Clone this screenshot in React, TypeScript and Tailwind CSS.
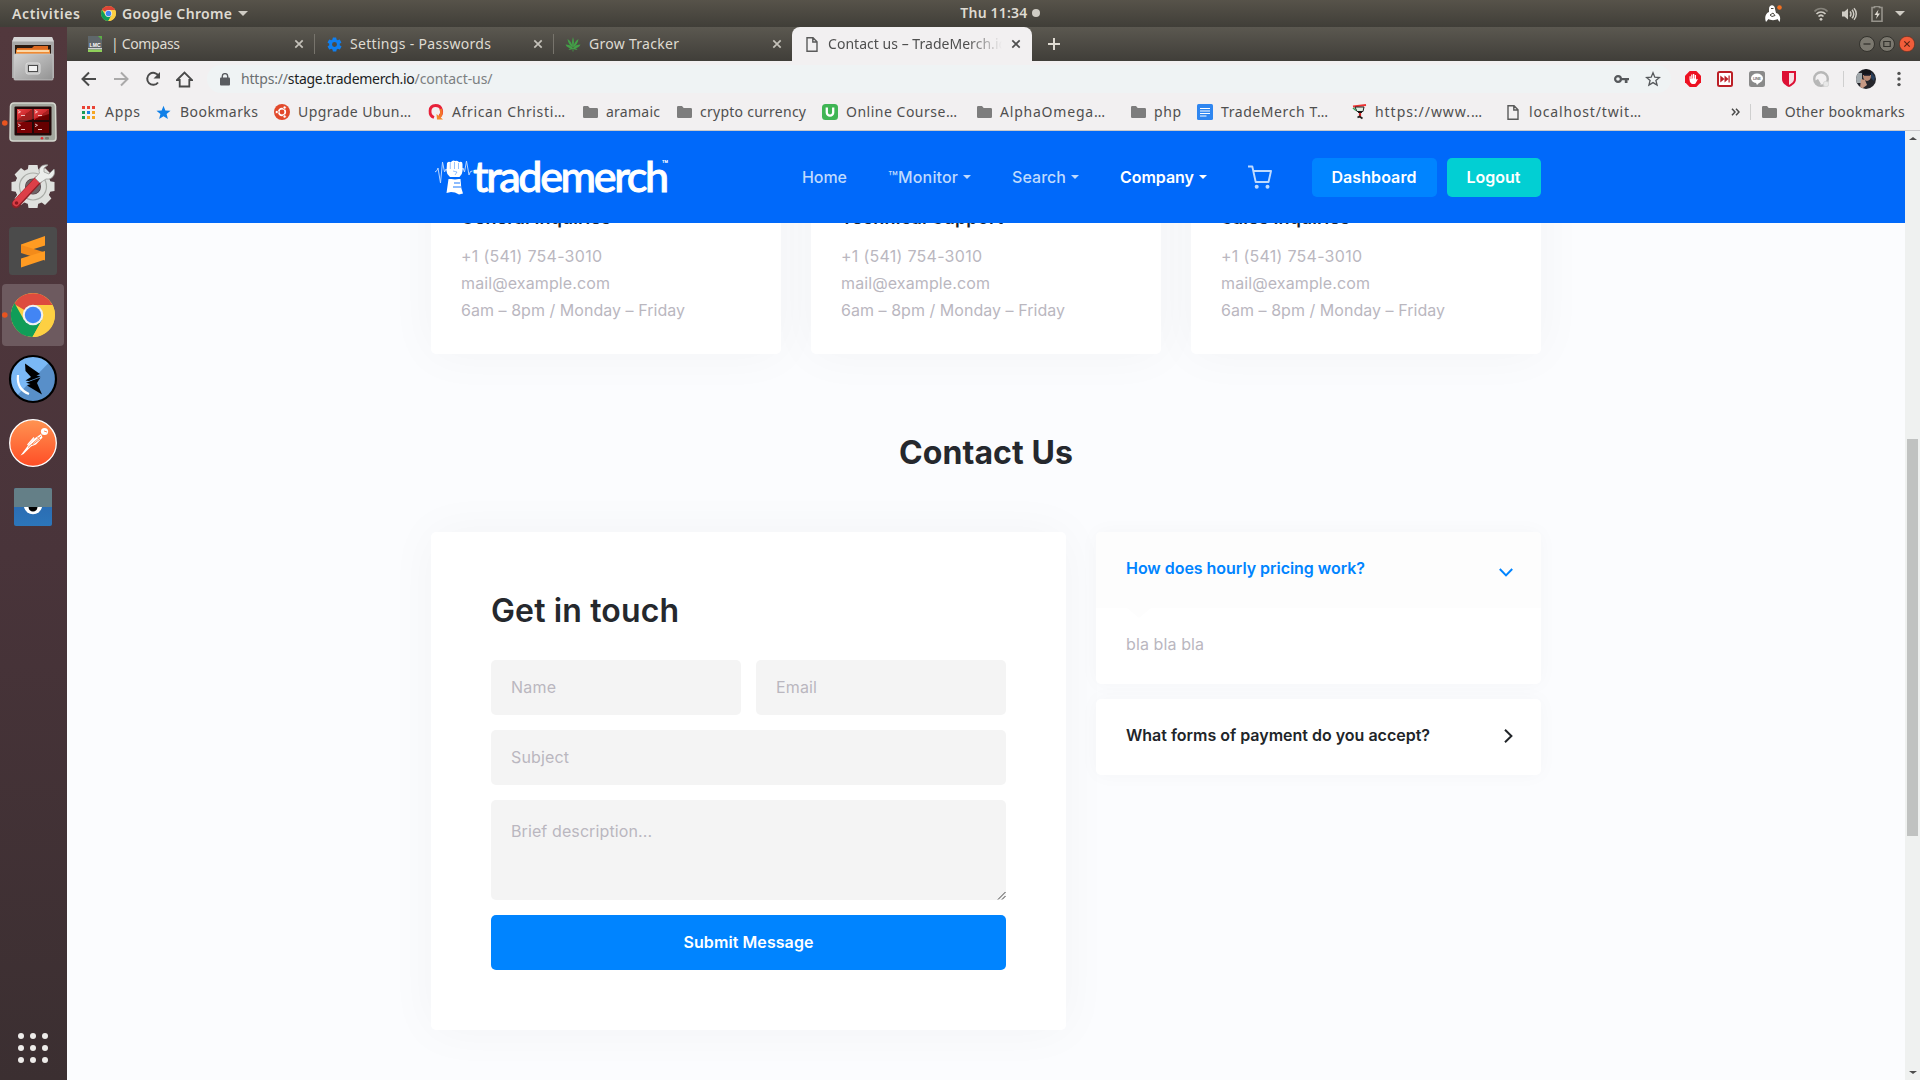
import React, { useLayoutEffect, useRef, useState } from "react";

const UI = "font-['Noto_Sans','Open_Sans',sans-serif]";

/* Text tracked so that it fills a given width in pixels. */
function Fit({ w, text, className = "" }: { w: number; text: string; className?: string }) {
  const ref = useRef<HTMLSpanElement>(null);
  const [ls, setLs] = useState(0);
  useLayoutEffect(() => {
    const el = ref.current;
    if (!el) return;
    el.style.letterSpacing = "0px";
    const natural = el.getBoundingClientRect().width;
    setLs((w - natural) / Math.max(1, text.length - 1));
    el.style.letterSpacing = "";
  }, [w, text]);
  return (
    <span ref={ref} className={"inline-block whitespace-pre shrink-0 " + className} style={ls ? { letterSpacing: ls + "px" } : undefined}>
      {text}
    </span>
  );
}

function ChromeMark({ className }: { className: string }) {
  return (
    <svg viewBox="0 0 44 44" className={className}>
      <circle cx="22" cy="22" r="22" fill="#fdd043" />
      <path d="M22 22 L3 11 A22 22 0 0 1 41.5 12 L22 12 Z" fill="#dd4437" />
      <path d="M3 11 A22 22 0 0 0 21.5 44 L31 27 L22 22 L13 27 Z" fill="#109d58" />
      <path d="M22 12 L41.500 12 A22 22 0 0 1 21.500 44 L31 27 Z" fill="#fdd043" />
      <circle cx="22" cy="22" r="10.200" fill="#f1f1f1" />
      <circle cx="22" cy="22" r="8" fill="#4285f4" />
    </svg>
  );
}

function TopBar() {
  return (
    <div className={"flex h-[27px] w-full shrink-0 items-center bg-gradient-to-b from-[#57534a] to-[#403e38] text-[14px] font-semibold text-[#dfdbd2] " + UI}>
      <div className="flex w-[89px] items-center pl-3"><Fit w={68} text="Activities" /></div>
      <ChromeMark className="ml-3 h-[15px] w-[15px]" />
      <Fit w={110} text="Google Chrome" className="ml-[6px]" />
      <span className="ml-[6px] border-x-[5px] border-t-[5px] border-x-transparent border-t-[#cfccc4]" />
      <Fit w={67} text="Thu 11:34" className="ml-[712px] -mt-[2px]" />
      <span className="ml-1 -mt-px h-2 w-2 rounded-full bg-[#cfccc4]" />
      <svg viewBox="0 0 18 20" className="ml-auto h-5 w-[18px] shrink-0">
        <path d="M5 5 C5 0 11 0 11 5 L12 9 C16 10 17 14 15.500 18 L13.500 15 C12 16.500 6 16.500 4.500 15 L2 18 C0 13 2 9 5 8 Z" fill="#fff" />
        <path d="M7 4.500h2.500M6 11l3-2 2 2.500-3 1Z" stroke="#4a4841" strokeWidth="1" fill="none" />
        <circle cx="15.500" cy="3.500" r="2.300" fill="#f37021" />
      </svg>
      <svg viewBox="0 0 16 16" className="ml-[31px] h-4 w-4 shrink-0 fill-none stroke-[#cfccc4]" strokeWidth="1.700">
        <path d="M1.500 5.500 C5 1.500 11 1.500 14.500 5.500" stroke="#85827a" />
        <path d="M3.500 8 C6 5.300 10 5.300 12.500 8M5.500 10.500 C7 9 9 9 10.500 10.500" />
        <circle cx="8" cy="13.300" r="1.400" fill="#cfccc4" stroke="none" />
      </svg>
      <svg viewBox="0 0 16 16" className="ml-3 h-4 w-4 shrink-0 fill-none stroke-[#cfccc4]" strokeWidth="1.500">
        <path d="M1 5.500h2.500L7 2.500v11l-3.500-3H1Z" fill="#cfccc4" stroke="none" />
        <path d="M9 5.500c1.300 1.300 1.300 3.700 0 5M11 3.800c2.300 2.300 2.300 6.100 0 8.400M13 2.300c3 3.200 3 8.200 0 11.400" />
      </svg>
      <svg viewBox="0 0 12 16" className="ml-[14px] h-4 w-3 shrink-0">
        <path d="M3.500 1.500v-1h5v1H11v13.700H1V1.500Z" fill="none" stroke="#96938b" strokeWidth="1.600" />
        <path d="M7.500 3.500 3.500 9H6L5 13l4-5.500H6.500Z" fill="#dfdbd2" />
      </svg>
      <span className="ml-3 mr-[15px] border-x-[5px] border-t-[5px] border-x-transparent border-t-[#cfccc4]" />
    </div>
  );
}

function DockSlot({ children, active, running }: { children: React.ReactNode; active?: boolean; running?: boolean }) {
  return (
    <div className="h-16 w-full pl-[2px] py-px">
      <div className={active ? "h-[62px] w-[62px] rounded-[4px] bg-[#6d5a5f]" : "h-[62px] w-[62px]"}>
        <svg viewBox="2 1 62 62" className="h-[62px] w-[62px]">
          {running && <circle cx="4.800" cy="32" r="2.800" fill="#e95420" />}
          {children}
        </svg>
      </div>
    </div>
  );
}

function Dock() {
  return (
    <div className="flex w-[67px] shrink-0 flex-col bg-gradient-to-b from-[#52383d] via-[#49343a] to-[#3b2f31]">
      <DockSlot>
        <defs>
          <linearGradient id="cab" x1="0" y1="0" x2="1" y2="1"><stop offset="0" stopColor="#d2d2d2" /><stop offset="1" stopColor="#929292" /></linearGradient>
          <linearGradient id="red" x1="0" y1="0" x2="1" y2="1"><stop offset="0" stopColor="#e53a3d" /><stop offset=".5" stopColor="#b3141a" /><stop offset=".52" stopColor="#760000" /><stop offset="1" stopColor="#5f0000" /></linearGradient>
          <linearGradient id="post" x1="0" y1="0" x2="0" y2="1"><stop offset="0" stopColor="#ff9452" /><stop offset="1" stopColor="#ff4e26" /></linearGradient>
          <linearGradient id="eye" x1="0" y1="0" x2="0" y2="1"><stop offset="0" stopColor="#2b65ad" /><stop offset="1" stopColor="#2c76ba" /></linearGradient>
        </defs>
        <path d="M14 10h38l2 5v36H12V15Z" fill="#a8a8a8" />
        <path d="M14 10h38l2 4.500H12Z" fill="#d5d5d5" />
        <rect x="15" y="18" width="36" height="10" fill="#2b1b12" />
        <path d="M17 21h15l2-2h14v9H17Z" fill="#dd6a22" />
        <path d="M16 22.500h34V28H16Z" fill="#f08a33" />
        <path d="M17 24h32" stroke="#fff0cf" strokeWidth="1.500" />
        <rect x="14" y="27" width="39" height="26" rx="1" fill="url(#cab)" stroke="#c9c9c9" strokeWidth=".7" />
        <rect x="26" y="36" width="14" height="11" rx="2" fill="#bdbdbd" stroke="#dedede" />
        <rect x="28.500" y="38.500" width="9" height="6" fill="#f2f2f2" stroke="#4b4b4b" />
      </DockSlot>
      <DockSlot running>
        <path d="M14 12h38q3 0 3.500 3L56 47q0 3-3 3H13q-3 0-3-3l.500-32q.500-3 3.500-3Z" fill="#a3a79e" stroke="#d5d8cf" strokeWidth="1.500" />
        <rect x="14.500" y="15.500" width="37" height="29" rx="1" fill="#220909" />
        <rect x="17" y="18" width="15" height="11" fill="url(#red)" /><rect x="34" y="18" width="15" height="11" fill="url(#red)" />
        <rect x="17" y="31" width="15" height="11" fill="#7b0205" /><rect x="34" y="31" width="15" height="11" fill="#650000" />
        <path d="M17 18h32l0 5L17 33Z" fill="#ff5a5a" opacity=".35" />
        <path d="M18 19.500l2.500 1.300-2.500 1.300M21 24.500h4M35 19.500l2.500 1.300-2.500 1.300M38 24.500h4M18 33l2.500 1.300-2.500 1.300M21 38.500h4M35 33l2.500 1.300-2.500 1.300M38 38.500h4" stroke="#f4d0d0" strokeWidth=".9" fill="none" />
        <circle cx="42" cy="47.300" r="1.300" fill="#e4282e" /><rect x="45" y="46" width="4" height="2.500" rx="1" fill="#777b73" />
      </DockSlot>
      <DockSlot>
        <circle cx="33" cy="31.500" r="13" fill="none" stroke="#dfe1de" strokeWidth="10" />
        {[0, 45, 90, 135, 180, 225, 270, 315].map((a) => <path key={a} d="M27.500 16l1-6h9l1 6Z" fill="#dfe1de" transform={`rotate(${a} 33 31.500)`} />)}
        <circle cx="33" cy="31.500" r="13.500" fill="none" stroke="#a9aca7" strokeWidth="1.200" />
        <circle cx="33" cy="31.500" r="7.500" fill="#6d6366" />
        <path d="M16 49 L38 25" stroke="#8d2027" strokeWidth="8.500" strokeLinecap="round" />
        <path d="M16 48 L38 24.500" stroke="#dc3f48" strokeWidth="6.500" strokeLinecap="round" />
        <path d="M35 23 L40 28 L46 24 C52 25 56 20 54 14 L49 19 L44 17 L44 13 L48 10 C41 9 38 14 39.500 18 Z" fill="#eceeec" stroke="#9a9c99" strokeWidth=".8" />
        <circle cx="16.500" cy="48" r="1.800" fill="#8c1820" />
      </DockSlot>
      <DockSlot>
        <rect x="9" y="8" width="48" height="48" rx="3.500" fill="#4b4b4b" />
        <path d="M21 25.500 L45 17v9.500L21 34Z" fill="#ff9b22" />
        <path d="M21 26v8l24 7.500v-8Z" fill="#f38b1a" />
        <path d="M21 39.500 L45 32v8.500L21 48.500Z" fill="#ff9b22" />
      </DockSlot>
      <DockSlot active running>
        <g transform="translate(11 10)">
          <circle cx="22" cy="22" r="22" fill="#fdd043" />
          <path d="M22 22 L3 11 A22 22 0 0 1 41.500 12 L22 12 Z" fill="#dd4b3e" />
          <path d="M3.500 10 A22 22 0 0 0 21.500 44 L31 27 L22 22 L13 27 Z" fill="#109d58" />
          <path d="M22 12 L41.500 12 A22 22 0 0 1 21.500 44 L31 27 Z" fill="#fdd043" />
          <circle cx="22" cy="22" r="10.300" fill="#f1f1f1" /><circle cx="22" cy="22" r="8.200" fill="#4285f4" />
        </g>
      </DockSlot>
      <DockSlot>
        <circle cx="33" cy="32" r="23" fill="#7ab8f5" />
        <path d="M49 15.500 A23 23 0 0 1 17 48.500 Z" fill="#588fc9" />
        <circle cx="33" cy="32" r="23" fill="none" stroke="#000" strokeWidth="2.200" />
        <path d="M25 16.500 40 27 36.500 28.500 40.500 29.500 29 34 25.500 33.500 31 30 25.500 24Z" fill="#000" />
        <path d="M26 35.800 40.500 30.500 37 36 42 47.500 27 38.500 30.500 37Z" fill="#000" />
        <path d="M18 28 C17 37 21 44 29 47" stroke="#fff" strokeWidth="2.200" fill="none" />
      </DockSlot>
      <DockSlot>
        <circle cx="33" cy="32" r="23.300" fill="url(#post)" stroke="#fff" strokeWidth="1.300" />
        <circle cx="44.500" cy="20.500" r="3.600" fill="#fff" />
        <path d="M41 23 L33 28.500 L28 34.500 L20.500 44.500 L23.500 43 L31 35.500 L36 33.500 L42.500 26.500 Z" fill="#fff" />
        <path d="M41 25 L28 36.500M40 28l-8 6M44 20l3 1M37 25.500l3 3" stroke="#ff7a41" strokeWidth=".9" />
        <path d="M27.500 34 L34 26.500" stroke="#fff" strokeWidth="1.200" />
      </DockSlot>
      <DockSlot>
        <rect x="14" y="13" width="38" height="38" rx="2" fill="url(#eye)" />
        <path d="M16 13h34q2 0 2 2v17H14V15q0-2 2-2Z" fill="#647f87" />
        <path d="M24 32 a9.200 9.200 0 0 0 18 0Z" fill="#fff" />
        <path d="M28.500 32 a4.500 4.500 0 0 0 9 0Z" fill="#000" />
      </DockSlot>
      <div className="mt-auto mb-[17px] ml-[18px] grid w-[30px] grid-cols-3 gap-[6px]">
        {Array.from({ length: 9 }, (_, i) => <span key={i} className="h-[6px] w-[6px] rounded-full bg-[#eeecea]" />)}
      </div>
    </div>
  );
}

function Close({ dark }: { dark?: boolean }) {
  return (
    <svg viewBox="0 0 10 10" className="h-[10px] w-[10px] shrink-0">
      <path d="M1.300 1.300l7.400 7.400M8.700 1.300L1.300 8.700" stroke={dark ? "#4f4f4f" : "#c4c1b9"} strokeWidth="1.700" />
    </svg>
  );
}

function PageIcon({ className = "" }: { className?: string }) {
  return (
    <svg viewBox="0 0 12 15" className={"h-[15px] w-3 shrink-0 " + className}>
      <path d="M1 .8h6l4 4v9.400H1ZM6.800 1v4H11" fill="none" stroke="#5a5a5a" strokeWidth="1.400" />
    </svg>
  );
}

function TabStrip() {
  return (
    <div className="flex h-[34px] items-center bg-gradient-to-b from-[#5b5850] to-[#403e39] text-[14px] text-[#dfdbd2]">
      <div className="flex h-full w-[247px] items-center pl-[21px]">
        <svg viewBox="0 0 14 16" className="h-4 w-[14px] shrink-0">
          <path d="M0 0h14v16H0Z" fill="#5f676b" /><path d="M10 0h4v4Z" fill="#5dae46" />
          <path d="M0 13.500h14V16H0Z" fill="#8fd05a" /><path d="M0 12.200h14v1H0Z" fill="#eee" />
          <text x="1.500" y="11" fontSize="5" fontWeight="bold" fill="#fff" fontFamily="Liberation Sans" textLength="11">LMC</text>
        </svg>
        <Fit w={69} text="| Compass" className="-mt-[2px] ml-[9px]" />
        <span className="ml-auto mr-[10px] flex"><Close /></span>
      </div>
      <div className="flex h-full w-[239px] items-center">
        <span className="h-5 w-px bg-[#77746c]" />
        <svg viewBox="0 0 24 24" className="ml-[11px] h-[17px] w-[17px] shrink-0">
          <path fill="#0f7ff0" d="M19.400 13a7.500 7.500 0 0 0 0-2l2.100-1.600a.5.5 0 0 0 .1-.6l-2-3.500a.5.5 0 0 0-.6-.2l-2.500 1a7.300 7.300 0 0 0-1.700-1L14.500 2.400a.5.5 0 0 0-.5-.4h-4a.5.5 0 0 0-.5.4l-.4 2.700a7.300 7.300 0 0 0-1.700 1l-2.500-1a.5.5 0 0 0-.6.2l-2 3.500a.5.5 0 0 0 .1.600L4.600 11a7.500 7.500 0 0 0 0 2l-2.100 1.600a.5.5 0 0 0-.1.600l2 3.500c.1.200.4.300.6.200l2.500-1a7.300 7.300 0 0 0 1.700 1l.4 2.700c0 .2.200.4.500.4h4c.2 0 .5-.2.500-.4l.4-2.700a7.300 7.300 0 0 0 1.700-1l2.500 1c.2.100.5 0 .6-.2l2-3.500a.5.5 0 0 0-.1-.6Zm-7.400 2.500a3.500 3.500 0 1 1 0-7 3.500 3.500 0 0 1 0 7Z" />
        </svg>
        <Fit w={141} text="Settings - Passwords" className="-mt-[2px] ml-[7px]" />
        <span className="ml-auto mr-[10px] flex"><Close /></span>
      </div>
      <div className="flex h-full w-[239px] items-center">
        <span className="h-5 w-px bg-[#77746c]" />
        <svg viewBox="0 0 16 16" className="ml-[11px] h-4 w-4 shrink-0 fill-[#43a047]">
          <path d="M8 1C9.300 5 9.300 8 8 11.500 6.700 8 6.700 5 8 1ZM2.500 3C5.500 5 7.200 7.500 7.800 11.500 4.500 9.500 3 6.500 2.500 3ZM13.500 3C10.500 5 8.800 7.500 8.200 11.500 11.500 9.500 13 6.500 13.500 3ZM.5 8.500C3.500 8.500 6 9.500 7.800 12 4.500 12.500 2 11.500.5 8.500ZM15.500 8.500C12.500 8.500 10 9.500 8.200 12 11.500 12.500 14 11.500 15.500 8.500ZM3.500 13.500C5 12 6.500 11.700 8 12 9.500 11.700 11 12 12.500 13.500 11 14 9.500 13.700 8.400 12.700V15.500H7.600V12.700C6.500 13.700 5 14 3.500 13.500Z" />
        </svg>
        <Fit w={90} text="Grow Tracker" className="-mt-[2px] ml-2" />
        <span className="ml-auto mr-[10px] flex"><Close /></span>
      </div>
      <div className="flex h-full w-[240px] items-center rounded-t-lg bg-[#f2f0f1] pl-[14px] text-[#4f4f4f]">
        <PageIcon />
        <span className="-mt-[2px] ml-[10px] w-[174px] overflow-hidden [mask-image:linear-gradient(to_right,#000_80%,transparent)]">
          <Fit w={179} text="Contact us – TradeMerch.io" />
        </span>
        <span className="ml-[9px] flex"><Close dark /></span>
      </div>
      <svg viewBox="0 0 12 12" className="ml-4 h-3 w-3"><path d="M6 0v12M0 6h12" stroke="#dfdbd2" strokeWidth="2" /></svg>
      <div className="ml-auto mr-[5px] flex gap-1">
        <svg viewBox="0 0 16 16" className="h-4 w-4"><circle cx="8" cy="8" r="7.500" fill="#7b786f" stroke="#33322d" /><path d="M4.500 8h7" stroke="#33322d" strokeWidth="1.300" /></svg>
        <svg viewBox="0 0 16 16" className="h-4 w-4"><circle cx="8" cy="8" r="7.500" fill="#7b786f" stroke="#33322d" /><path d="M4.800 5.500h6.400v5H4.800Z" fill="none" stroke="#33322d" strokeWidth="1.200" /></svg>
        <svg viewBox="0 0 16 16" className="h-4 w-4"><circle cx="8" cy="8" r="7.700" fill="#f15d3a" stroke="#52281d" strokeWidth=".6" /><path d="M5.300 5.300l5.400 5.400M10.700 5.300l-5.400 5.400" stroke="#5a2415" strokeWidth="1.200" /></svg>
      </div>
    </div>
  );
}

function Toolbar() {
  return (
    <div className="flex h-9 items-center bg-[#f2f0f1] pl-[14px] text-[14px]">
      <svg viewBox="0 0 16 16" className="h-4 w-4 shrink-0 fill-none stroke-[#4a4a4a]" strokeWidth="2"><path d="M15 8H2M8 1.500L1.500 8 8 14.500" /></svg>
      <svg viewBox="0 0 16 16" className="ml-4 h-4 w-4 shrink-0 fill-none stroke-[#aaa9a9]" strokeWidth="2"><path d="M1 8h13M8 1.500L14.500 8 8 14.500" /></svg>
      <svg viewBox="0 0 16 16" className="ml-4 h-4 w-4 shrink-0"><path d="M13 11.500A6 6 0 1 1 13.500 5" fill="none" stroke="#4a4a4a" strokeWidth="2" /><path d="M15 1v6.500H8.500Z" fill="#4a4a4a" /></svg>
      <svg viewBox="0 0 17 17" className="ml-[15px] h-[17px] w-[17px] shrink-0 fill-none stroke-[#4a4a4a]" strokeWidth="1.800"><path d="M1 9L8.500 1.500 16 9H13.300V15.500H3.700V9Z" /></svg>
      <div className="ml-[14px] flex h-[28px] w-[1464px] shrink-0 items-center rounded-full bg-[#eff3f4] pl-[13px]">
        <svg viewBox="0 0 10 13" className="h-[13px] w-[10px] shrink-0"><rect x="0" y="4.500" width="10" height="8" rx="1" fill="#5a5c60" /><path d="M2.300 5V3.300a2.700 2.700 0 0 1 5.400 0V5" stroke="#5a5c60" strokeWidth="1.400" fill="none" /></svg>
        <Fit w={47} text="https://" className="-mt-[2px] ml-[11px] text-[#6b6f71]" />
        <Fit w={127} text="stage.trademerch.io" className="-mt-[2px] text-[#1c1e1f]" />
        <Fit w={78} text="/contact-us/" className="-mt-[2px] text-[#7c8082]" />
        <svg viewBox="0 0 15 10" className="ml-auto h-[10px] w-[15px]"><circle cx="4" cy="5" r="2.900" fill="none" stroke="#55585b" strokeWidth="2.200" /><path d="M7 3.900h8v2.400h-1.500V9h-2.700V6.300H7Z" fill="#55585b" /></svg>
        <svg viewBox="0 0 16 16" className="ml-4 mr-[10px] h-4 w-4"><path d="M8 1.800l1.800 4.400 4.700.3-3.600 3 1.200 4.600L8 11.600 3.900 14.100l1.200-4.600-3.600-3 4.700-.3Z" fill="none" stroke="#55585b" strokeWidth="1.300" /></svg>
      </div>
      <svg viewBox="0 0 16 16" className="ml-[14px] h-4 w-4 shrink-0"><path d="M4.700 0h6.600L16 4.700v6.600L11.300 16H4.700L0 11.300V4.700Z" fill="#ed1122" /><path d="M4.500 8.500V5.300h1.200V8h.5V3.500h1.300V7.500H8V3h1.300v4.500h.5V4H11v5l.8-1.200 1 .5L10.500 12.500Q9 13.500 6.500 12.800 4.500 11.500 4.500 8.500Z" fill="#fff" /></svg>
      <svg viewBox="0 0 16 16" className="ml-4 h-4 w-4 shrink-0"><rect x="1" y="1" width="14" height="14" rx="1.500" fill="#fff" stroke="#bc1f26" strokeWidth="2" /><path d="M3.300 4.500L7.500 8 3.300 11.500ZM7.500 4.500L11.500 8 7.500 11.500ZM11.500 4.500h1.200v7h-1.200Z" fill="#bc1f26" /></svg>
      <svg viewBox="0 0 16 16" className="ml-4 h-4 w-4 shrink-0"><rect width="16" height="16" rx="2.500" fill="#8a8a8a" /><ellipse cx="8" cy="7.300" rx="6" ry="4.800" fill="#fff" /><path d="M6.500 11L8 14l3-3Z" fill="#fff" /><text x="4" y="9" fontSize="4" fontFamily="Liberation Sans" fontWeight="bold" fill="#777" textLength="8">LINE</text></svg>
      <svg viewBox="0 0 16 16" className="ml-4 h-4 w-4 shrink-0"><path d="M1 0h14v8c0 4-3.500 6.500-7 8-3.500-1.500-7-4-7-8Z" fill="#dd1034" /><path d="M8 2h5v6c0 2.700-2.400 4.700-5 5.900Z" fill="#f6dfe4" /></svg>
      <svg viewBox="0 0 16 16" className="ml-4 h-4 w-4 shrink-0"><circle cx="8" cy="8" r="6.800" fill="#f2f0f1" stroke="#b7b7b7" strokeWidth="2.400" /><path d="M1.500 10L5 8l3 5-3 2Z" fill="#b7b7b7" /><circle cx="13" cy="13" r="2.800" fill="#e8e8e8" stroke="#ccc" strokeWidth=".6" /></svg>
      <span className="ml-[14px] h-4 w-px bg-[#cfcfcf]" />
      <svg viewBox="0 0 20 20" className="ml-3 h-5 w-5 shrink-0">
        <clipPath id="av"><circle cx="10" cy="10" r="10" /></clipPath>
        <g clipPath="url(#av)"><path d="M0 0h20v20H0Z" fill="#26262c" /><path d="M0 4h6v10H0Z" fill="#a2a9ad" /><ellipse cx="11" cy="7" rx="4" ry="5" fill="#b98873" /><path d="M6 2q5-4 10 1v3H7Z" fill="#15151b" /><path d="M8 5h6v1.700H8Z" fill="#191a28" /><path d="M5 10l4 1 2 5-4 3H4Z" fill="#c79a85" /><path d="M15 3l4 5-1 4-3-3Z" fill="#293e5b" /></g>
      </svg>
      <svg viewBox="0 0 4 16" className="ml-[21px] h-4 w-1 shrink-0 fill-[#505050]"><circle cx="2" cy="2.400" r="1.700" /><circle cx="2" cy="8" r="1.700" /><circle cx="2" cy="13.600" r="1.700" /></svg>
    </div>
  );
}

function Folder() {
  return <svg viewBox="0 0 15 12" className="h-3 w-[15px]"><path d="M0 1.200Q0 0 1.200 0H5l1.700 2h7Q15 2 15 3.200v7.600q0 1.200-1.200 1.200H1.200Q0 12 0 10.800Z" fill="#7d7d7d" /></svg>;
}

const squares = ["#ea4335", "#ea4335", "#ea4335", "#1a9d57", "#1a83e8", "#f5a623", "#1a9d57", "#f5a623", "#f5a623"];

function Bookmark({ width, slot = "w-[23px]", tw, text, children }: { width: string; slot?: string; tw: number; text: string; children: React.ReactNode }) {
  return (
    <div className={"flex shrink-0 items-center " + width}>
      <span className={"flex shrink-0 " + slot}>{children}</span>
      <Fit w={tw} text={text} className="-mt-[2px]" />
    </div>
  );
}

function BookmarksBar() {
  return (
    <div className="flex h-[34px] items-center border-b border-[#c9c9cb] bg-[#f2f0f1] pb-[3px] pl-[15px] text-[14px] text-[#4f4f4f]">
      <Bookmark width="w-[74px]" tw={35} text="Apps">
        <span className="grid grid-cols-3 gap-[2px]">{squares.map((c, i) => <i key={i} className="h-[3px] w-[3px]" style={{ background: c }} />)}</span>
      </Bookmark>
      <Bookmark width="w-[118px]" slot="w-6" tw={78} text="Bookmarks">
        <svg viewBox="0 0 16 16" className="h-[15px] w-[15px]"><path d="M8 .8l2 5 5.500.4-4.200 3.500 1.400 5.300L8 12.100 3.300 15l1.400-5.300L.5 6.200 6 5.800Z" fill="#1080e8" /></svg>
      </Bookmark>
      <Bookmark width="w-[154px]" slot="w-6" tw={113} text="Upgrade Ubun…">
        <svg viewBox="0 0 16 16" className="h-4 w-4"><circle cx="8" cy="8" r="8" fill="#e2492b" /><circle cx="8" cy="8" r="3.300" fill="none" stroke="#fff" strokeWidth="1.700" /><g fill="#fff" stroke="#e2492b" strokeWidth=".7"><circle cx="2.800" cy="8" r="1.600" /><circle cx="10.600" cy="3.500" r="1.600" /><circle cx="10.600" cy="12.500" r="1.600" /></g></svg>
      </Bookmark>
      <Bookmark width="w-[155px]" slot="w-6" tw={113} text="African Christi…">
        <svg viewBox="0 0 16 16" className="h-4 w-4"><path d="M6 13.500C.5 11.500.5 1.500 7.500 1.500c7 0 7.500 8 4 11" fill="none" stroke="#e8213a" strokeWidth="2.800" /><path d="M8.500 10l6.500 5.500H9Z" fill="#f58a2a" /><path d="M12.500 5c1.500 3 1 6-1 8" stroke="#f4762a" strokeWidth="2.600" fill="none" /></svg>
      </Bookmark>
      <Bookmark width="w-[94px]" tw={54} text="aramaic"><Folder /></Bookmark>
      <Bookmark width="w-[145px]" tw={106} text="crypto currency"><Folder /></Bookmark>
      <Bookmark width="w-[155px]" slot="w-6" tw={111} text="Online Course…">
        <svg viewBox="0 0 16 16" className="h-4 w-4"><rect width="16" height="16" rx="3.500" fill="#3fb554" /><path d="M4.800 3.500v5a3.200 3.200 0 0 0 6.400 0v-5" fill="none" stroke="#fff" strokeWidth="2.300" /></svg>
      </Bookmark>
      <Bookmark width="w-[154px]" tw={105} text="AlphaOmega…"><Folder /></Bookmark>
      <Bookmark width="w-[66px]" tw={27} text="php"><Folder /></Bookmark>
      <Bookmark width="w-[155px]" slot="w-6" tw={107} text="TradeMerch T…">
        <svg viewBox="0 0 16 16" className="h-4 w-4"><rect width="16" height="16" rx="1.500" fill="#2f86f0" /><path d="M3 4.500h10M3 7h10M3 9.500h10M3 12h6.500" stroke="#fff" strokeWidth="1.200" /></svg>
      </Bookmark>
      <Bookmark width="w-[155px]" tw={107} text="https://www.…">
        <svg viewBox="0 0 16 16" className="h-4 w-4"><path d="M1 2.500L14 1" stroke="#e33" strokeWidth="1.800" /><path d="M3 3h9l-1 4.500H5Z" fill="#dceee2" stroke="#222" /><path d="M1 4l3 2.500" stroke="#31a05a" strokeWidth="1.500" /><path d="M8 8v5" stroke="#c22" strokeWidth="2.200" /><path d="M5.500 13.500l2-1 3 2" stroke="#222" strokeWidth="1.800" fill="none" /><path d="M6 8.200h4" stroke="#111" strokeWidth="1.500" /></svg>
      </Bookmark>
      <Bookmark width="w-[140px]" slot="w-[22px]" tw={112} text="localhost/twit…"><PageIcon className="h-[14px]" /></Bookmark>
      <svg viewBox="0 0 9 8" className="ml-auto h-2 w-[9px] shrink-0"><path d="M1 .7L4 4 1 7.300M5 .7L8 4 5 7.300" stroke="#4a4a4a" strokeWidth="1.500" fill="none" /></svg>
      <span className="ml-[10px] h-4 w-px bg-[#cfcfcf]" />
      <span className="ml-[11px] mr-2"><Folder /></span>
      <Fit w={120} text="Other bookmarks" className="-mt-[2px] mr-[15px]" />
    </div>
  );
}

function Caret() {
  return <span className="ml-[5px] border-x-[4.500px] border-t-[4px] border-x-transparent border-t-current" />;
}

function Logo() {
  return (
    <div className="flex h-[36px] w-[240px] items-center text-white">
      <svg viewBox="0 0 38 36" className="h-9 w-[38px] shrink-0">
        <path d="M0 13l2-1.500L3 9l2.500 15L7.500 3l2 10 1.500-3 2 2.500M26 12l2-3 1.500 4L31.500 2 34 16l1.500-3.500 2-.5" fill="none" stroke="#b9d6ff" strokeWidth="1" />
        <path d="M12 4q2-2 3.500-.5Q18 .5 20 2q3-1 4 1.200Q27.500 2 27.500 5v7q0 3-3 6H15q-3.500-3-3.500-6Z" fill="#fff" />
        <path d="M15.300 4v6M19.500 3v7M23.500 4v6M18 12l4 1-2 3" stroke="#0069fa" strokeWidth=".7" fill="none" opacity=".6" />
        <path d="M13.500 20h12l.8 9 1.700 5.500-4 1-4-2-4-.5-4.500 1Z" fill="#fff" />
        <path d="M15 19.300q5 1.500 10 0M19 24h6M18 28h8" stroke="#0069fa" strokeWidth=".9" fill="none" />
      </svg>
      <Fit w={196} text="trademerch" className="mt-[-2px] font-['Lato',sans-serif] text-[43px] leading-[36px] [-webkit-text-stroke:0.9px_#fff]" />
      <span className="-ml-[5px] mb-[26px] font-['Inter'] text-[10px] leading-none font-bold">™</span>
    </div>
  );
}

function NavBar() {
  return (
    <div className="flex h-[92px] shrink-0 items-center bg-[#0069fa] pl-[368px] text-[16px] font-medium text-[#bfdafe]">
      <Logo />
      <div className="-mt-px ml-[127px] flex w-[86px]"><Fit w={45} text="Home" /></div>
      <div className="-mt-px flex w-[124px] items-center"><Fit w={70} text="™Monitor" /><Caret /></div>
      <div className="-mt-px flex w-[108px] items-center"><Fit w={54} text="Search" /><Caret /></div>
      <div className="-mt-px flex w-[128px] items-center font-semibold text-white"><Fit w={74} text="Company" /><Caret /></div>
      <svg viewBox="0 0 24 24" className="h-6 w-6 shrink-0"><path d="M0 1.500h4.300L7.700 17H20.500L23 6H5.200" fill="none" stroke="#bfdafe" strokeWidth="1.900" strokeLinejoin="round" /><circle cx="8.700" cy="21.700" r="2" fill="#bfdafe" /><circle cx="19.500" cy="21.700" r="2" fill="#bfdafe" /></svg>
      <button className="ml-10 flex h-[39px] w-[125px] items-center justify-center rounded-[5px] bg-[#0084ff] pr-px font-semibold text-white"><Fit w={85} text="Dashboard" /></button>
      <button className="ml-[10px] flex h-[39px] w-[94px] items-center justify-center rounded-[5px] bg-[#02cfd3] pr-px font-semibold text-white"><Fit w={54} text="Logout" /></button>
    </div>
  );
}

const SHADOW = "shadow-[0_0_50px_rgba(31,45,61,0.04)]";

function InfoCard({ title, tw }: { title: string; tw: number }) {
  return (
    <div className={"flex h-[214px] flex-col justify-end rounded-[5px] bg-white px-[30px] pb-[30px] text-[16px] leading-[27px] text-[#bab7bf] " + SHADOW}>
      <h3 className="mb-[14px] text-[18px] leading-[22px] font-semibold text-[#212529]"><Fit w={tw} text={title} /></h3>
      <p><Fit w={141} text="+1 (541) 754-3010" /></p>
      <p><Fit w={149} text="mail@example.com" /></p>
      <p><Fit w={224} text="6am – 8pm / Monday – Friday" /></p>
    </div>
  );
}

const FIELD = "flex h-[55px] items-center rounded-[5px] bg-[#f4f4f4] px-5 pb-px text-[#bab7bf]";

function ContactForm() {
  return (
    <div className={"h-[498px] w-[635px] rounded-[5px] bg-white p-[60px] " + SHADOW}>
      <h2 className="h-[68px] text-[32px] leading-[38px] font-semibold text-[#25282d]"><Fit w={188} text="Get in touch" /></h2>
      <div className="grid gap-[15px]">
        <div className="grid grid-cols-2 gap-[15px]">
          <div className={FIELD}><Fit w={45} text="Name" /></div>
          <div className={FIELD}><Fit w={41} text="Email" /></div>
        </div>
        <div className={FIELD}><Fit w={58} text="Subject" /></div>
        <div className="relative h-[100px] rounded-[5px] bg-[#f4f4f4] px-5 pt-[19px] leading-6 text-[#bab7bf]">
          <Fit w={141} text="Brief description..." />
          <svg viewBox="0 0 9 9" className="absolute right-0 bottom-0 h-[9px] w-[9px]"><path d="M1 8.500L8.500 1M5 8.500L8.500 5" stroke="#444" strokeWidth="1" /></svg>
        </div>
        <button className="flex h-[55px] items-center justify-center rounded-[5px] bg-[#0084ff] pb-[2px] font-semibold text-white"><Fit w={130} text="Submit Message" /></button>
      </div>
    </div>
  );
}

function Faq() {
  return (
    <div className="flex w-[445px] flex-col gap-[15px]">
      <div className="h-[152px] rounded-[5px] bg-white shadow-[0_0_20px_rgba(31,45,61,0.03)]">
        <div className="flex h-[76px] justify-between rounded-t-[5px] bg-[#fdfdfd] pt-[24px] pr-7 pl-[30px] font-semibold text-[#0084ff]">
          <Fit w={239} text="How does hourly pricing work?" />
          <svg viewBox="0 0 14 9" className="mt-[12px] h-[9px] w-[14px]"><path d="M.8 1L7 7.400 13.200 1" fill="none" stroke="#0084ff" strokeWidth="2" /></svg>
        </div>
        <div className="ml-[31px] h-0 w-0 border-x-[12px] border-t-[10px] border-x-transparent border-t-[#fdfdfd]" />
        <p className="mt-[13px] pl-[30px] leading-[27px] text-[#bab7bf]"><Fit w={78} text="bla bla bla" /></p>
      </div>
      <div className="flex h-[76px] justify-between rounded-[5px] bg-white pt-[24px] pr-7 pl-[30px] font-semibold text-[#212529] shadow-[0_0_20px_rgba(31,45,61,0.03)]">
        <Fit w={304} text="What forms of payment do you accept?" />
        <svg viewBox="0 0 9 14" className="mt-[6px] h-[14px] w-[9px]"><path d="M1 .8L7.400 7 1 13.200" fill="none" stroke="#212529" strokeWidth="2" /></svg>
      </div>
    </div>
  );
}

function Scrollbar() {
  return (
    <div className="flex w-[15px] shrink-0 flex-col items-center bg-[#eff1f0] pt-[6px]">
      <span className="border-x-[4px] border-b-[3px] border-x-transparent border-b-[#4d4d4d]" />
      <span className="mt-[299px] h-[397px] w-[11px] bg-[#c0c2c1]" />
      <span className="mt-auto mb-[6px] border-x-[4px] border-t-[3px] border-x-transparent border-t-[#4d4d4d]" />
    </div>
  );
}

export default function App() {
  return (
    <div className="flex h-[1080px] w-[1920px] flex-col overflow-hidden">
      <TopBar />
      <div className="flex min-h-0 flex-1">
        <Dock />
        <div className="flex min-w-0 flex-1 flex-col">
          <div className={UI}>
            <TabStrip />
            <Toolbar />
            <BookmarksBar />
          </div>
          <div className="flex min-h-0 flex-1">
            <div className="flex min-w-0 flex-1 flex-col bg-[#fbfcfe] font-['Inter',sans-serif]">
              <NavBar />
              <div className="min-h-0 flex-1 overflow-hidden">
                <div className="mx-auto w-[1110px] text-[16px]">
                  <div className="-mt-[83px] grid grid-cols-3 gap-[30px]">
                    <InfoCard title="General Inquiries" tw={150} />
                    <InfoCard title="Technical Support" tw={162} />
                    <InfoCard title="Sales Inquiries" tw={129} />
                  </div>
                  <h1 className="mt-[80px] text-center text-[32px] leading-[38px] font-bold text-[#25282d]"><Fit w={174} text="Contact Us" /></h1>
                  <div className="mt-[60px] flex gap-[30px]">
                    <ContactForm />
                    <Faq />
                  </div>
                </div>
              </div>
            </div>
            <Scrollbar />
          </div>
        </div>
      </div>
    </div>
  );
}
